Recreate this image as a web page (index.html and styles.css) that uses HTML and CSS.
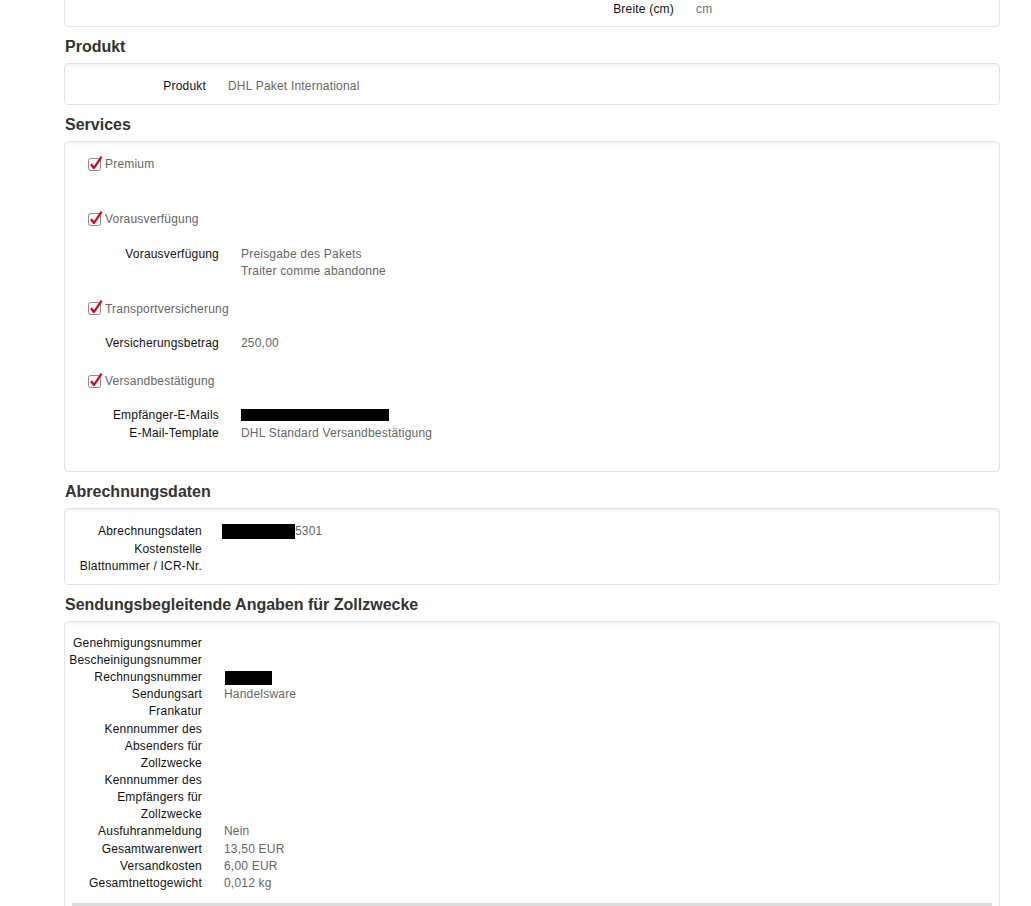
FILE: index.html
```html
<!DOCTYPE html>
<html lang="de">
<head>
<meta charset="utf-8">
<title>Sendung</title>
<link rel="stylesheet" href="styles.css">
</head>
<body>
<div class="page">

  <div class="card card-cut">
    <div class="two-col">
      <div></div>
      <div class="dl dl-breite">
        <div class="dt">Breite (cm)</div><div class="dd dd-cm">cm</div>
      </div>
    </div>
  </div>

  <h2 class="section-title">Produkt</h2>
  <div class="card">
    <div class="dl dl-produkt">
      <div class="dt">Produkt</div><div class="dd">DHL Paket International</div>
    </div>
  </div>

  <h2 class="section-title">Services</h2>
  <div class="card card-services">
    <div class="service">
      <div class="check"><svg class="cb" width="15" height="15" viewBox="0 0 15 15"><rect x="0.5" y="2.5" width="12" height="12" rx="2" fill="#f4f4f4" stroke="#8a8a8a"/><path d="M3 8.2 L6 12 L13.6 0.6" fill="none" stroke="#d0021b" stroke-width="2.2" stroke-linejoin="round"/></svg><span>Premium</span></div>
      <div class="sub"></div>
    </div>
    <div class="service">
      <div class="check"><svg class="cb" width="15" height="15" viewBox="0 0 15 15"><rect x="0.5" y="2.5" width="12" height="12" rx="2" fill="#f4f4f4" stroke="#8a8a8a"/><path d="M3 8.2 L6 12 L13.6 0.6" fill="none" stroke="#d0021b" stroke-width="2.2" stroke-linejoin="round"/></svg><span>Vorausverfügung</span></div>
      <div class="sub dl dl-services">
        <div class="dt">Vorausverfügung</div><div class="dd">Preisgabe des Pakets<br>Traiter comme abandonne</div>
      </div>
    </div>
    <div class="service">
      <div class="check"><svg class="cb" width="15" height="15" viewBox="0 0 15 15"><rect x="0.5" y="2.5" width="12" height="12" rx="2" fill="#f4f4f4" stroke="#8a8a8a"/><path d="M3 8.2 L6 12 L13.6 0.6" fill="none" stroke="#d0021b" stroke-width="2.2" stroke-linejoin="round"/></svg><span>Transportversicherung</span></div>
      <div class="sub dl dl-services">
        <div class="dt">Versicherungsbetrag</div><div class="dd">250,00</div>
      </div>
    </div>
    <div class="service">
      <div class="check"><svg class="cb" width="15" height="15" viewBox="0 0 15 15"><rect x="0.5" y="2.5" width="12" height="12" rx="2" fill="#f4f4f4" stroke="#8a8a8a"/><path d="M3 8.2 L6 12 L13.6 0.6" fill="none" stroke="#d0021b" stroke-width="2.2" stroke-linejoin="round"/></svg><span>Versandbestätigung</span></div>
      <div class="sub dl dl-services">
        <div class="dt">Empfänger-E-Mails</div><div class="dd"><span class="redact redact-mail"></span></div>
        <div class="dt">E-Mail-Template</div><div class="dd">DHL Standard Versandbestätigung</div>
      </div>
    </div>
  </div>

  <h2 class="section-title">Abrechnungsdaten</h2>
  <div class="card">
    <div class="dl dl-abr">
      <div class="dt">Abrechnungsdaten</div><div class="dd"><span class="redact redact-abr"></span>5301</div>
      <div class="dt">Kostenstelle</div><div class="dd"></div>
      <div class="dt">Blattnummer / ICR-Nr.</div><div class="dd"></div>
    </div>
  </div>

  <h2 class="section-title">Sendungsbegleitende Angaben für Zollzwecke</h2>
  <div class="card card-zoll">
    <div class="dl dl-zoll">
      <div class="dt">Genehmigungsnummer</div><div class="dd"></div>
      <div class="dt">Bescheinigungsnummer</div><div class="dd"></div>
      <div class="dt">Rechnungsnummer</div><div class="dd"><span class="redact redact-re"></span></div>
      <div class="dt">Sendungsart</div><div class="dd">Handelsware</div>
      <div class="dt">Frankatur</div><div class="dd"></div>
      <div class="dt">Kennnummer des<br>Absenders für<br>Zollzwecke</div><div class="dd"></div>
      <div class="dt">Kennnummer des<br>Empfängers für<br>Zollzwecke</div><div class="dd"></div>
      <div class="dt">Ausfuhranmeldung</div><div class="dd">Nein</div>
      <div class="dt">Gesamtwarenwert</div><div class="dd">13,50 EUR</div>
      <div class="dt">Versandkosten</div><div class="dd">6,00 EUR</div>
      <div class="dt">Gesamtnettogewicht</div><div class="dd">0,012 kg</div>
    </div>
    <div class="zoll-divider"></div>
  </div>

</div>
</body>
</html>
```

FILE: styles.css
```css
html, body {
  margin: 0;
  padding: 0;
  background: #ffffff;
}

body {
  font-family: "Liberation Sans", Arial, sans-serif;
  font-size: 12px;
  line-height: 1.428571;
  color: #111;
  height: 906px;
  overflow: hidden;
}

.page {
  margin-left: 64px;
  width: 936px;
}

.card {
  border: 1px solid #e3e3e3;
  border-radius: 4px;
  background: #fff;
  box-shadow: inset 0 2px 3px rgba(0, 0, 0, 0.05);
  padding: 14px 0 9px 0;
  letter-spacing: 0.2px;
}

.card-cut {
  margin-top: -14px;
  padding-bottom: 8px;
  border-top-left-radius: 0;
  border-top-right-radius: 0;
}

.card-zoll {
  padding-top: 13px;
}

.section-title {
  margin: 10px 0 6px 1px;
  font-size: 16px;
  line-height: 20px;
  font-weight: bold;
  color: #333;
}

.two-col {
  display: grid;
  grid-template-columns: 467px 1fr;
}

.dl {
  display: grid;
  grid-template-columns: var(--lw) 1fr;
  column-gap: var(--gap);
}

.dt {
  text-align: right;
  color: #111;
  white-space: nowrap;
}

.dd {
  color: #666;
  min-height: 17px;
}

.dd-cm {
  color: #7d6a6e;
}

.dl-breite { --lw: 142px; --gap: 22px; }
.dl-produkt { --lw: 141px; --gap: 22px; }
.dl-services { --lw: 154px; --gap: 22px; }
.dl-abr { --lw: 137px; --gap: 20px; }
.dl-zoll { --lw: 137px; --gap: 22px; }

.service {
  margin-bottom: 20.75px;
}

.check {
  display: flex;
  align-items: center;
  gap: 2px;
  padding-left: 23px;
  color: #666;
  height: 17.14px;
}

.cb {
  display: block;
  margin-top: -3px;
}

.sub {
  padding-top: 17.25px;
}

.redact {
  display: inline-block;
  background: #000;
  vertical-align: middle;
}

.redact-mail {
  width: 148px;
  height: 12px;
  margin-top: -3px;
}

.redact-abr {
  width: 73px;
  height: 15px;
  margin-top: -2px;
}

.redact-re {
  width: 47px;
  height: 14px;
  margin-left: 1px;
  margin-top: -1px;
}

.zoll-divider {
  margin: 11px 7px 40px 7px;
  border-top: 3px solid #dcdcdc;
}
```
